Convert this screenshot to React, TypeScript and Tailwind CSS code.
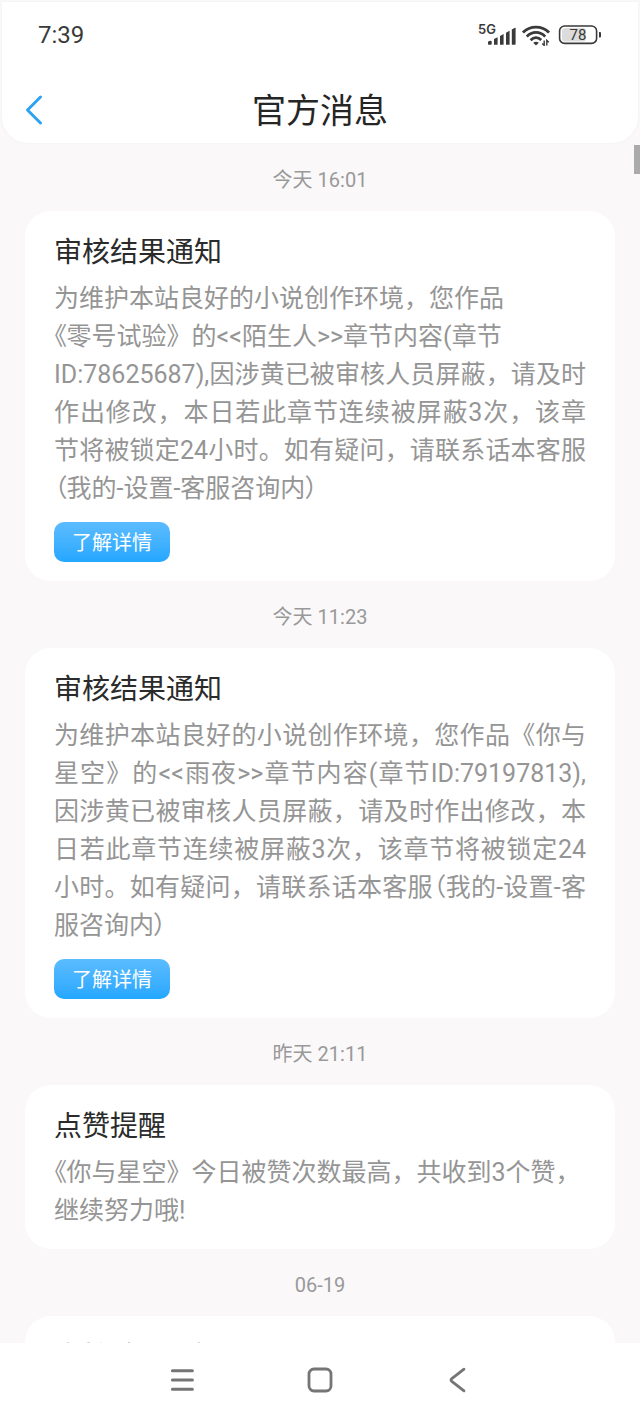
import React from 'react'

type Message = {
  id: number
  time: string
  title: string
  body: string
  hasDetail?: boolean
}

const messages: Message[] = [
  {
    id: 1,
    time: '今天 16:01',
    title: '审核结果通知',
    body: '为维护本站良好的小说创作环境，您作品\n《零号试验》的<<陌生人>>章节内容(章节\nID:78625687),因涉黄已被审核人员屏蔽，请及时作出修改，本日若此章节连续被屏蔽3次，该章节将被锁定24小时。如有疑问，请联系话本客服（我的-设置-客服咨询内）',
    hasDetail: true,
  },
  {
    id: 2,
    time: '今天 11:23',
    title: '审核结果通知',
    body: '为维护本站良好的小说创作环境，您作品《你与星空》的<<雨夜>>章节内容(章节ID:79197813),因涉黄已被审核人员屏蔽，请及时作出修改，本日若此章节连续被屏蔽3次，该章节将被锁定24小时。如有疑问，请联系话本客服（我的-设置-客服咨询内）',
    hasDetail: true,
  },
  {
    id: 3,
    time: '昨天 21:11',
    title: '点赞提醒',
    body: '《你与星空》今日被赞次数最高，共收到3个赞，\n继续努力哦!',
  },
  {
    id: 4,
    time: '06-19',
    title: '审核结果通知',
    body: '',
  },
]

// Parentheses and line-leading brackets use their proportional forms
function MessageBody({ text }: { text: string }) {
  return (
    <p className="mt-[7px] text-justify text-[25px] leading-[38px] whitespace-pre-line text-[#959595]">
      {text.split(/((?<=^|\n)《|[（）])/).map((part, i) =>
        i % 2 === 1 ? (
          <span key={i} className="[font-feature-settings:'palt']">
            {part}
          </span>
        ) : (
          part
        )
      )}
    </p>
  )
}

function MessageCard({ message }: { message: Message }) {
  return (
    <article>
      <time className="flex h-[67px] items-center justify-center pt-1 text-xl text-[#999999]">
        {message.time}
      </time>
      <div className="rounded-[26px] bg-white px-[29px] pt-[22px] pb-[19px]">
        <h2 className="text-[28px] leading-10 text-[#2b2b2b]">{message.title}</h2>
        {message.body && <MessageBody text={message.body} />}
        {message.hasDetail && (
          <button
            type="button"
            className="mt-[14px] block h-10 rounded-[10px] bg-linear-to-b from-[#5bbcff] to-[#22a7ff] px-[18px] pt-0.5 text-xl text-white"
          >
            了解详情
          </button>
        )}
      </div>
    </article>
  )
}

function StatusBar() {
  return (
    <div className="flex h-[66px] items-center justify-between pr-9 pl-9 text-[#3a3a3a]">
      <span className="text-2xl">7:39</span>
      <div className="flex items-center">
        {/* Signal */}
        <svg className="overflow-visible" width="38" height="22" viewBox="0 0 38 22" fill="currentColor" aria-hidden="true">
          <text x="0" y="10" fontSize="13" fontWeight="600" fontFamily="Inter, sans-serif">
            5G
          </text>
          <path d="M10 18.4 q0 -1.2 1.2 -1.4 l1.6 -.3 q.9 0 .9 .9 V20 q0 .8 -.8 .8 h-2.1 q-.8 0 -.8 -.8 z" />
          <path d="M16 14.9 l3.6 -1.7 V20.8 H16 z" />
          <path d="M22 12 l3.6 -2.1 V20.8 H22 z" />
          <path d="M28 8.8 l3.6 -2.1 V20.8 H28 z" />
          <path d="M33.8 5.6 l3.2 -1.9 q.6 -.2 .6 .5 V20 q0 .8 -.8 .8 h-3 z" />
        </svg>
        {/* Wifi */}
        <svg className="ml-1.5" width="28" height="22" viewBox="0 0 28 22" fill="none" stroke="currentColor" strokeWidth="2.8" aria-hidden="true">
          <path d="M1 8.6 C8 1.4 20 1.4 27 8.6" />
          <path d="M4.8 12.6 C10 7 18 7 23.2 12.6" />
          <path d="M8.6 16.2 C12 12.8 16 12.8 19.2 16" />
          <path d="M11.2 18.8 Q14 16.6 16.8 18.8 L14 21.4 Z" fill="currentColor" stroke="none" />
          <path d="M22.2 16.4 V21.4 L20.2 19.6 M24.8 21.4 V16.4 L26.8 18.2" strokeWidth="1.4" />
        </svg>
        {/* Battery */}
        <svg className="ml-2" width="44" height="20" viewBox="0 0 44 20" aria-hidden="true">
          <rect x="4" y="3" width="24" height="13.6" rx="3" fill="#dcdcdc" />
          <rect x="1.6" y="1" width="37" height="17.4" rx="5" fill="none" stroke="currentColor" strokeWidth="1.6" />
          <path d="M41 7 h1 q1 0 1 1 v3.6 q0 1 -1 1 h-1 z" fill="currentColor" />
          <text x="20" y="15" textAnchor="middle" fontSize="15" fontFamily="Roboto, sans-serif" fill="currentColor">
            78
          </text>
        </svg>
      </div>
    </div>
  )
}

export default function App() {
  return (
    <div className="relative flex h-screen flex-col bg-[#faf8f9] font-['Roboto','Noto_Sans_CJK_SC',sans-serif]">
      <header className="mx-0.5 mt-0.5 shrink-0 rounded-b-[26px] bg-white shadow-[0_0_3px_rgba(0,0,0,0.05)]">
        <StatusBar />
        <div className="grid h-[75px] grid-cols-[1fr_auto_1fr] items-start pt-4">
          <button type="button" aria-label="返回" className="ml-[22px] flex h-[52px] w-10 items-center">
            <svg width="20" height="32" viewBox="0 0 20 32" fill="none" stroke="#2ea3f2" strokeWidth="3" strokeLinecap="round" strokeLinejoin="round" aria-hidden="true">
              <path d="M16.5 3 L3.5 16 L16.5 29" />
            </svg>
          </button>
          <h1 className="text-[34px] leading-[54px] text-[#262626]">官方消息</h1>
        </div>
      </header>

      <main className="min-h-0 flex-1 overflow-hidden px-[25px] pt-px">
        {messages.map((message) => (
          <MessageCard key={message.id} message={message} />
        ))}
      </main>

      {/* Scroll thumb */}
      <div className="absolute top-[145px] right-0 h-[29px] w-1.5 bg-[#acabac]" />

      <nav className="z-10 flex h-[79px] shrink-0 justify-center gap-[97px] bg-white pt-[17px] text-[#757575]">
        <button type="button" aria-label="最近任务" className="flex size-10 items-center justify-center">
          <svg width="28" height="28" viewBox="0 0 28 28" fill="none" stroke="currentColor" strokeWidth="3" strokeLinecap="round" aria-hidden="true">
            <path d="M3.4 4.7 H23.4 M3.4 14 H23.4 M3.4 23.3 H23.4" />
          </svg>
        </button>
        <button type="button" aria-label="主屏幕" className="flex size-10 items-center justify-center">
          <svg width="28" height="28" viewBox="0 0 28 28" fill="none" stroke="currentColor" strokeWidth="2.8" aria-hidden="true">
            <rect x="3" y="3" width="22" height="22" rx="5" />
          </svg>
        </button>
        <button type="button" aria-label="返回上一页" className="flex size-10 items-center justify-center">
          <svg width="28" height="28" viewBox="0 0 28 28" fill="none" stroke="currentColor" strokeWidth="2.8" strokeLinecap="round" strokeLinejoin="round" aria-hidden="true">
            <path d="M21 3.2 L8.8 12.6 Q7.2 14 8.8 15.4 L21 24.8" />
          </svg>
        </button>
      </nav>
    </div>
  )
}
